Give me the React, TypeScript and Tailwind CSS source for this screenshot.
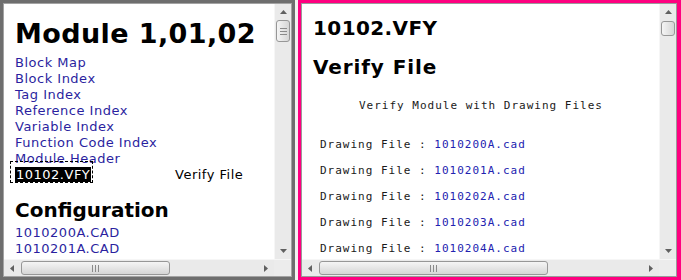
import React from 'react';

const sans = "font-['DejaVu_Sans',sans-serif]";
const mono = "font-['DejaVu_Sans_Mono',monospace]";

type Dir = 'up' | 'down' | 'left' | 'right';

const Arrow: React.FC<{ dir: Dir }> = ({ dir }) => {
  const vertical = dir === 'up' || dir === 'down';
  const points = {
    up: '0,4 3.5,0 7,4',
    down: '0,0 7,0 3.5,4',
    left: '4,0 4,7 0,3.5',
    right: '0,0 0,7 4,3.5',
  }[dir];
  return (
    <svg width={vertical ? 7 : 4} height={vertical ? 4 : 7} viewBox={vertical ? '0 0 7 4' : '0 0 4 7'}>
      <polygon points={points} fill="#606060" />
    </svg>
  );
};

const VScroll: React.FC<{ top: number; height: number; grip?: boolean }> = ({ top, height, grip }) => (
  <div className="w-[17px] h-full bg-[#eaeaea] border-l border-[#f6f6f6] flex flex-col">
    <div className="h-[16px] flex items-center justify-center">
      <Arrow dir="up" />
    </div>
    <div className="flex-1">
      <div
        className="mx-[1px] rounded-[3px] border border-[#979797] bg-gradient-to-r from-[#f5f5f5] to-[#d6d6d6] flex flex-col items-center justify-center gap-[2px]"
        style={{ marginTop: top, height }}
      >
        {grip && (
          <>
            <div className="w-[7px] h-[1px] bg-[#8a8a8a]" />
            <div className="w-[7px] h-[1px] bg-[#8a8a8a]" />
            <div className="w-[7px] h-[1px] bg-[#8a8a8a]" />
          </>
        )}
      </div>
    </div>
    <div className="h-[16px] flex items-center justify-center">
      <Arrow dir="down" />
    </div>
  </div>
);

const HScroll: React.FC<{ left: number; width: number }> = ({ left, width }) => (
  <div className="h-[17px] flex bg-[#eaeaea] border-t border-[#f6f6f6]">
    <div className="w-[16px] flex items-center justify-center">
      <Arrow dir="left" />
    </div>
    <div className="flex-1 py-[1px]">
      <div
        className="h-full rounded-[3px] border border-[#979797] bg-gradient-to-b from-[#f5f5f5] to-[#d6d6d6] flex items-center justify-center gap-[2px]"
        style={{ marginLeft: left, width }}
      >
        <div className="w-[1px] h-[7px] bg-[#8a8a8a]" />
        <div className="w-[1px] h-[7px] bg-[#8a8a8a]" />
        <div className="w-[1px] h-[7px] bg-[#8a8a8a]" />
      </div>
    </div>
    <div className="w-[16px] flex items-center justify-center">
      <Arrow dir="right" />
    </div>
    <div className="w-[17px] bg-[#ececec]" />
  </div>
);

const links = [
  'Block Map',
  'Block Index',
  'Tag Index',
  'Reference Index',
  'Variable Index',
  'Function Code Index',
  'Module Header',
];

const drawings = ['1010200A.cad', '1010201A.cad', '1010202A.cad', '1010203A.cad', '1010204A.cad'];

export default function App() {
  return (
    <div className="w-[681px] h-[280px] flex bg-[#ececec] overflow-hidden">
      {/* module index pane */}
      <div className="w-[295px] h-full border-[3px] border-[#6e6e6e]">
        <div className="h-full border border-[#a3a3a3] bg-white flex flex-col">
          <div className="flex-1 flex min-h-0">
            <div className={`flex-1 overflow-hidden pl-[11px] pt-[14px] ${sans}`}>
              <h1 className="text-[27px] leading-[32px] font-bold tracking-[0.4px] text-black whitespace-nowrap">Module 1,01,02</h1>
              <div className="mt-[5px] text-[13px] leading-[16px] tracking-[0.5px] whitespace-nowrap">
                {links.map((l) => (
                  <div key={l} className="text-[#2b1fa0]">{l}</div>
                ))}
                <div className="flex">
                  <div className="w-[160px]">
                    <span className="relative bg-black text-white px-[1px]">
                      10102.VFY
                      <span className="absolute -left-[5px] -top-[6px] -right-[2px] -bottom-[1px] border border-dashed border-black" />
                    </span>
                  </div>
                  <div className="text-black">Verify File</div>
                </div>
              </div>
              <h2 className="mt-[15px] text-[20px] leading-[24px] font-bold text-black">Configuration</h2>
              <div className="mt-[3px] text-[13px] leading-[16px] tracking-[0.5px] text-[#2b1fa0]">
                <div>1010200A.CAD</div>
                <div>1010201A.CAD</div>
              </div>
            </div>
            <VScroll top={0} height={22} grip />
          </div>
          <HScroll left={1} width={149} />
        </div>
      </div>

      <div className="w-[3px] h-full bg-[#f2f2f2]" />

      {/* verify file pane */}
      <div className="w-[383px] h-full border-[3px] border-r-[4px] border-[#ff0080]">
        <div className="h-full border border-[#9a9a9a] bg-white flex flex-col">
          <div className="flex-1 flex min-h-0">
            <div className={`flex-1 overflow-hidden pl-[11px] pt-[12px] ${sans}`}>
              <h1 className="text-[20px] leading-[24px] font-bold tracking-[0.4px] text-black">10102.VFY</h1>
              <h2 className="mt-[15px] text-[20px] leading-[24px] font-bold tracking-[0.9px] text-black">Verify File</h2>
              <div className={`mt-[19px] pl-[46px] text-[11px] leading-[16px] tracking-[1px] text-[#1a1a1a] whitespace-nowrap ${mono}`}>
                Verify Module with Drawing Files
              </div>
              <div className={`mt-[23px] pl-[7px] flex flex-col gap-[10px] text-[11px] leading-[16px] tracking-[1px] whitespace-nowrap ${mono}`}>
                {drawings.map((d) => (
                  <div key={d}>
                    <span className="text-[#1a1a1a]">Drawing File : </span>
                    <span className="text-[#2222b0]">{d}</span>
                  </div>
                ))}
              </div>
            </div>
            <VScroll top={1} height={15} />
          </div>
          <HScroll left={1} width={229} />
        </div>
      </div>
    </div>
  );
}
